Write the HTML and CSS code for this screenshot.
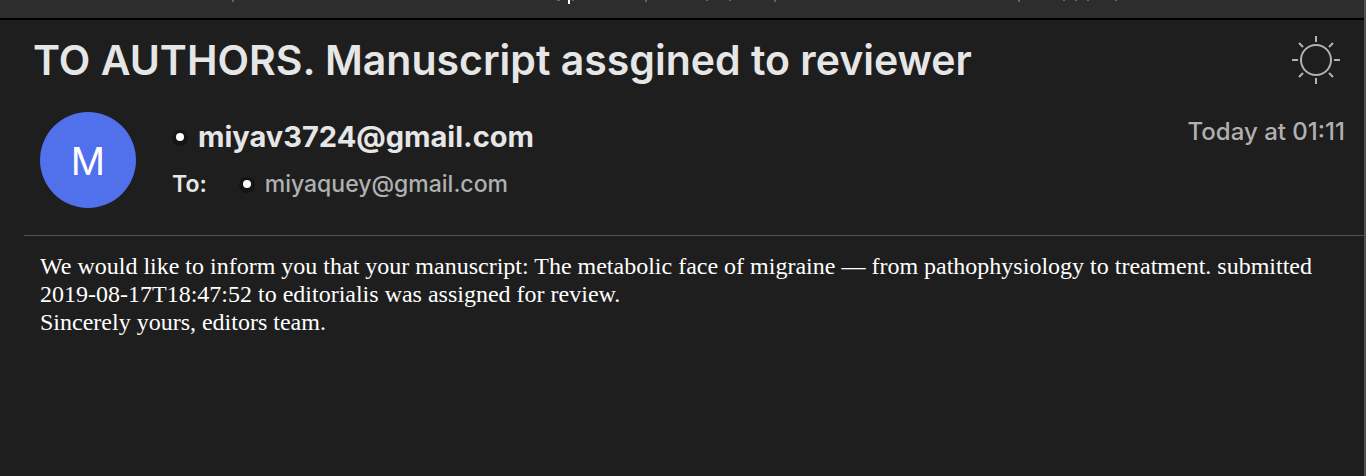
FILE: index.html
```html
<!DOCTYPE html>
<html lang="en">
<head>
<meta charset="utf-8">
<title>TO AUTHORS. Manuscript assgined to reviewer</title>
<link rel="stylesheet" href="styles.css">
</head>
<body>
<div class="toolbar">
  <svg class="toolbar-marks" width="1366" height="18" viewBox="0 0 1366 18" aria-hidden="true">
    <path fill="#636363" d="M232 0h2v2h-2zM645 0h2v2h-2zM774 0h2v2h-2zM1018 0h2v2h-2z"/>
    <path fill="#686868" d="M557 0h3v1h-3zM572 0h2v1h-2zM706 0h2v1h-2zM729 0h2v1h-2zM1063 0h2v1h-2zM1075 0h2v1h-2zM1087 0h2v1h-2zM1115 0h2v1h-2z"/>
    <path fill="#fff" d="M568 0h2v4h-2z"/>
  </svg>
</div>
<main class="message">
  <header class="header">
    <div class="title-row">
      <h1 class="subject">TO AUTHORS. Manuscript assgined to reviewer</h1>
      <button class="theme" type="button" aria-label="Switch message background">
        <svg width="48" height="48" viewBox="0 0 48 48" fill="none" stroke="#b2b2b2" stroke-width="2" aria-hidden="true">
          <circle cx="24" cy="24" r="15"/>
          <path d="M24 0v6M24 42v6M0 24h6M42 24h6M7 7l4 4M37 37l4 4M41 7l-4 4M11 37l-4 4"/>
        </svg>
      </button>
    </div>
    <div class="meta">
      <div class="avatar">M</div>
      <div class="people">
        <div class="from"><span class="dot"></span>miyav3724@gmail.com</div>
        <div class="to"><span class="label">To:</span><span class="dot"></span><span>miyaquey@gmail.com</span></div>
      </div>
      <time class="date">Today at 01:11</time>
    </div>
  </header>
  <div class="body">
    <p>We would like to inform you that your manuscript: The metabolic face of migraine — from pathophysiology to treatment. submitted 2019-08-17T18:47:52 to editorialis was assigned for review.</p>
    <p>Sincerely yours, editors team.</p>
  </div>
</main>
</body>
</html>
```

FILE: styles.css
```css
* { box-sizing: border-box; }
body {
  margin: 0;
  min-height: 100vh;
  display: flex;
  flex-direction: column;
  background: #1e1e1e;
  color: #e6e6e6;
  font-family: Inter, "Liberation Sans", sans-serif;
  border-right: 2px solid #515150;
}
.toolbar {
  height: 20px;
  overflow: hidden;
  background: #2d2d2d;
  border-bottom: 2px solid #000;
}
.toolbar-marks { display: block; }
.header {
  margin-left: 24px;
  padding: 16px 0 27px 9px;
  border-bottom: 1px solid #515151;
}
.title-row {
  display: flex;
  align-items: center;
  justify-content: space-between;
  padding-right: 24px;
}
.subject {
  margin: 0;
  font-size: 41px;
  line-height: 50px;
  font-weight: 600;
}
.theme {
  display: flex;
  padding: 0;
  border: 0;
  background: none;
}
.title-row { height: 48px; }
.meta {
  display: flex;
  align-items: flex-start;
  padding: 28px 19px 0 7px;
}
.avatar {
  width: 96px;
  height: 96px;
  margin-right: 36px;
  border-radius: 50%;
  background: #5070ec;
  color: #fff;
  font-size: 38px;
  line-height: 98px;
  text-align: center;
}
.people { flex: 1; }
.from, .to { display: flex; align-items: center; }
.from {
  padding-top: 7px;
  font-size: 29px;
  line-height: 36px;
  font-weight: 700;
}
.to {
  margin-top: 14px;
  font-size: 23px;
  line-height: 30px;
  font-weight: 500;
  color: #b0b0b0;
}
.label {
  margin-right: 30px;
  font-weight: 600;
  color: #e6e6e6;
}
.dot {
  width: 8px;
  height: 8px;
  margin: 0 14px 0 4px;
  border-radius: 50%;
  background: #fff;
  box-shadow: 0 1px 0 4px #151515;
}
.to .dot { margin-left: 6px; }
.date {
  padding-top: 5px;
  font-size: 24px;
  line-height: 30px;
  font-weight: 500;
  color: #b0b0b0;
}
.body {
  padding: 16px 40px;
  color: #fff;
  font-family: "Liberation Serif", serif;
  font-size: 24px;
  line-height: 28px;
}
.body p { margin: 0; }
```
